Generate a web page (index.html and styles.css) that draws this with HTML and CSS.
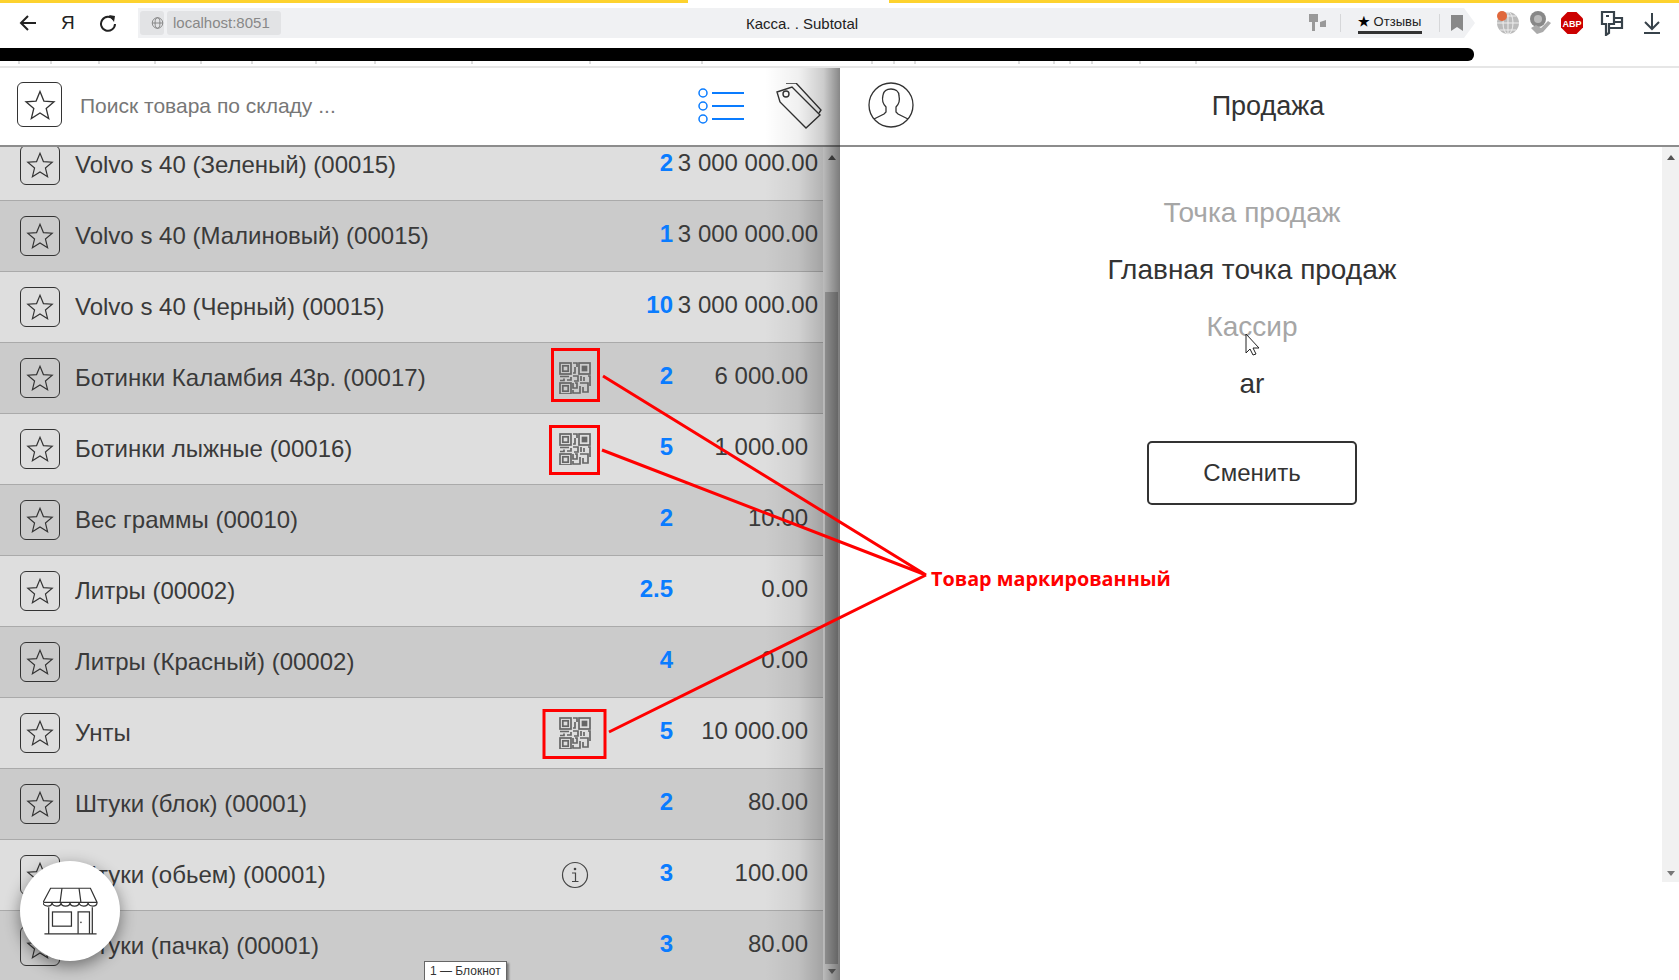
FILE: index.html
```html
<!DOCTYPE html>
<html lang="ru">
<head>
  <meta charset="UTF-8">
  <title>Касса. . Subtotal</title>
  <link rel="stylesheet" href="styles.css">
</head>
<body>
  <svg class="defs" width="0" height="0">
    <symbol id="star" viewBox="0 0 32 32">
      <path d="M16 2.5l3.9 9.6 10.1.7-7.8 6.6 2.5 10.1-8.700-5.500-8.700 5.500 2.500-10.100-7.800-6.600 10.100-.7z" fill="none" stroke="#333" stroke-width="1.300"/>
    </symbol>
    <symbol id="qr" viewBox="0 0 32 32">
      <g fill="none" stroke="#666" stroke-width="1.700">
        <rect x="1" y="1" width="11" height="11"/><rect x="3.800" y="3.800" width="5.400" height="5.400"/>
        <rect x="20" y="1" width="11" height="11"/><rect x="23.500" y="4.500" width="4" height="4" fill="#666"/>
        <rect x="1" y="21" width="11" height="11"/><rect x="3.800" y="23.800" width="5.400" height="5.400"/>
        <path d="M14 1h4v4M16 5v6h-2M1 14.500h9M1 18.500h4v-2M8 18h4v-3M14 14h5v5h-4M22 14v5M25 15v4M29 14h2v10M14 21v5h4v-5h-2M21 21h8v9h-5v-5M21 24v7h-7v-3"/>
      </g>
    </symbol>
  </svg>

  <header class="browser">
    <div class="loadbar"><span class="load-a"></span><span class="load-b"></span></div>
    <div class="toolbar">
      <div class="nav">
        <svg width="18" height="18" viewBox="0 0 18 18"><path d="M17 9H2M9 2L2 9l7 7" fill="none" stroke="#222" stroke-width="2"/></svg>
        <span class="ya">Я</span>
        <svg width="18" height="18" viewBox="0 0 18 18"><path d="M14.500 5.500A7 7 0 1 0 16 10" fill="none" stroke="#222" stroke-width="2"/><path d="M10 1l6 1-1 6z" fill="#222"/></svg>
      </div>
      <div class="address">
        <span class="globe-chip"><svg width="16" height="16" viewBox="0 0 16 16"><g fill="none" stroke="#777"><circle cx="8" cy="8" r="6.500"/><ellipse cx="8" cy="8" rx="3" ry="6.500"/><path d="M1.500 8h13"/></g></svg></span>
        <span class="host">localhost:8051</span>
        <span class="page-title">Касса. . Subtotal</span>
        <svg class="key" width="20" height="22" viewBox="0 0 20 22"><path d="M1 2h9v8H7v9H4v-9H1z" fill="#999"/><path d="M12 10l6-2v7h-6z" fill="#999"/></svg>
        <span class="sep"></span>
        <span class="reviews"><b>★</b> Отзывы</span>
        <span class="sep"></span>
        <svg width="12" height="16" viewBox="0 0 12 16"><path d="M0 0h12v16l-6-4-6 4z" fill="#888"/></svg>
      </div>
      <div class="extensions">
        <svg width="24" height="24" viewBox="0 0 24 24"><circle cx="12" cy="12" r="11" fill="#bbb"/><path d="M1 12h22M12 1v22M4 5h16M4 19h16" stroke="#eee"/><ellipse cx="12" cy="12" rx="5" ry="11" fill="none" stroke="#eee"/><circle cx="6" cy="5" r="5" fill="#e0683c"/></svg>
        <svg width="24" height="24" viewBox="0 0 24 24"><circle cx="10" cy="8" r="8" fill="#888"/><circle cx="10" cy="8" r="4" fill="#bbb"/><path d="M3 17l6 6 6-2 8-9-3-2-7 7-5-3z" fill="#aaa"/></svg>
        <svg class="abp-icon" width="22" height="22" viewBox="0 0 22 22"><path d="M6.500 0h9L22 6.500v9L15.500 22h-9L0 15.500v-9z" fill="#c00"/><text x="11" y="14.500" class="abp">ABP</text></svg>
        <svg class="ext-key" width="24" height="26" viewBox="0 0 24 26"><path d="M2 2h12v12H9v9l-3 2v-11H2zM14 8h8v10H9" fill="none" stroke="#37424a" stroke-width="2.200"/><path d="M6 6h3" stroke="#37424a" stroke-width="2"/><path d="M14 12h8" stroke="#37424a" stroke-width="2"/></svg>
        <svg width="18" height="22" viewBox="0 0 18 22"><path d="M9 1v15M2 10l7 7 7-7M1 21h16" fill="none" stroke="#37424a" stroke-width="2"/></svg>
      </div>
    </div>
    <div class="blackout"></div>
    <svg class="ticks" width="1474" height="3"><path d="M19 0v3M51 0v3M99 0v3M155 0v3M201 0v3M252 0v3M316 0v3M375 0v3M472 0v3M590 0v3M702 0v3M872 0v3M894 0v3M915 0v3M1019 0v3M1054 0v3M1070 0v3M1092 0v3M1140 0v3M1196 0v3" stroke="#bbb"/></svg>
  </header>

  <main class="app">
    <section class="stock">
      <div class="stock-head">
        <span class="star-box big"><svg width="32" height="32"><use href="#star"/></svg></span>
        <span class="search">Поиск товара по складу ...</span>
        <svg class="list-icon" width="46" height="36" viewBox="0 0 46 36"><g fill="none" stroke="#0a7cff" stroke-width="1.500"><circle cx="5" cy="5" r="4"/><circle cx="5" cy="18" r="4"/><circle cx="5" cy="31" r="4"/><path d="M14 5h32M14 18h32M14 31h32" stroke-width="2"/></g></svg>
        <svg class="tag-icon" width="46" height="46" viewBox="0 0 46 46"><g fill="none" stroke="#333" stroke-width="1.400"><path d="M1 9L16 4l28 28-14 13L4 19z"/><path d="M10 0h10l25 27-2 3"/><circle cx="10" cy="11" r="3"/></g></svg>
      </div>
      <div class="stock-body">
        <div class="rows">
          <div class="row"><span class="star-box"><svg width="28" height="28"><use href="#star"/></svg></span><span class="name">Volvo s 40 (Зеленый) (00015)</span><span class="qty">2</span><span class="price long">3 000 000.00</span></div>
          <div class="row"><span class="star-box"><svg width="28" height="28"><use href="#star"/></svg></span><span class="name">Volvo s 40 (Малиновый) (00015)</span><span class="qty">1</span><span class="price long">3 000 000.00</span></div>
          <div class="row"><span class="star-box"><svg width="28" height="28"><use href="#star"/></svg></span><span class="name">Volvo s 40 (Черный) (00015)</span><span class="qty">10</span><span class="price long">3 000 000.00</span></div>
          <div class="row"><span class="star-box"><svg width="28" height="28"><use href="#star"/></svg></span><span class="name">Ботинки Каламбия 43р. (00017)</span><svg class="mark" width="32" height="32"><use href="#qr"/></svg><span class="qty">2</span><span class="price">6 000.00</span></div>
          <div class="row"><span class="star-box"><svg width="28" height="28"><use href="#star"/></svg></span><span class="name">Ботинки лыжные (00016)</span><svg class="mark" width="32" height="32"><use href="#qr"/></svg><span class="qty">5</span><span class="price">1 000.00</span></div>
          <div class="row"><span class="star-box"><svg width="28" height="28"><use href="#star"/></svg></span><span class="name">Вес граммы (00010)</span><span class="qty">2</span><span class="price">10.00</span></div>
          <div class="row"><span class="star-box"><svg width="28" height="28"><use href="#star"/></svg></span><span class="name">Литры (00002)</span><span class="qty">2.5</span><span class="price">0.00</span></div>
          <div class="row"><span class="star-box"><svg width="28" height="28"><use href="#star"/></svg></span><span class="name">Литры (Красный) (00002)</span><span class="qty">4</span><span class="price">0.00</span></div>
          <div class="row"><span class="star-box"><svg width="28" height="28"><use href="#star"/></svg></span><span class="name">Унты</span><svg class="mark" width="32" height="32"><use href="#qr"/></svg><span class="qty">5</span><span class="price">10 000.00</span></div>
          <div class="row"><span class="star-box"><svg width="28" height="28"><use href="#star"/></svg></span><span class="name">Штуки (блок) (00001)</span><span class="qty">2</span><span class="price">80.00</span></div>
          <div class="row"><span class="star-box"><svg width="28" height="28"><use href="#star"/></svg></span><span class="name">Штуки (обьем) (00001)</span><svg class="mark info" width="28" height="28" viewBox="0 0 28 28"><g fill="none" stroke="#444" stroke-width="1.200"><circle cx="14" cy="14" r="12.500"/><path d="M11 12h3.500v8M11 20.500h6.500"/></g><circle cx="14" cy="8" r="1.300" fill="#444"/></svg><span class="qty">3</span><span class="price">100.00</span></div>
          <div class="row"><span class="star-box"><svg width="28" height="28"><use href="#star"/></svg></span><span class="name">Штуки (пачка) (00001)</span><span class="qty">3</span><span class="price">80.00</span></div>
        </div>
        <div class="scrollbar">
          <span class="arrow up"></span>
          <span class="thumb"></span>
          <span class="arrow down"></span>
        </div>
      </div>
      <div class="edge-shadow"></div>
    </section>

    <section class="sale">
      <div class="sale-head">
        <svg class="avatar" width="46" height="46" viewBox="0 0 46 46"><g fill="none" stroke="#333" stroke-width="1.300"><circle cx="23" cy="23" r="22"/><path d="M6 37l10-5 2-2v-5c-3-3-4-8-3-12 1-5 5-6 8-6 4 0 8 2 8 7 1 4 0 8-3 11v5l2 2 10 5"/></g></svg>
        <h1 class="sale-title">Продажа</h1>
      </div>
      <div class="sale-body">
        <div class="sale-info">
          <div class="label">Точка продаж</div>
          <div class="value">Главная точка продаж</div>
          <div class="label">Кассир</div>
          <div class="value">ar</div>
          <button class="change">Сменить</button>
        </div>
        <div class="side-scroll">
          <span class="arrow up"></span>
          <span class="arrow down"></span>
        </div>
      </div>
    </section>
  </main>

  <button class="store-btn">
    <svg width="55" height="48" viewBox="0 0 58 50"><g fill="none" stroke="#333" stroke-width="1.300"><path d="M8 1h42l7 15c0 5-9 5-9.500 0 0 5-9 5-9.500 0 0 5-9.500 5-9.500 0 0 5-9.500 5-9.500 0 0 5-9 5-9.500 0 0 5-9 5-9.500 0z"/><path d="M1 16h56M20 1l-2 15M38 1l2 15"/><path d="M6 21v28h46V21M1.500 49h55"/><rect x="10" y="26" width="20" height="15"/><path d="M37 49V26h12v23"/></g><circle cx="40" cy="37" r=".8" fill="#333"/></svg>
  </button>
  <div class="notepad">1 — Блокнот</div>

  <svg class="callouts" width="1679" height="980" viewBox="0 0 1679 980">
    <g fill="none" stroke="#f00" stroke-width="3">
      <rect x="552.500" y="349.500" width="46" height="51"/>
      <rect x="550.500" y="426.500" width="48" height="47"/>
      <rect x="544" y="710.500" width="61" height="47"/>
      <path d="M603 376L926 575L602 450M926 575L609 732"/>
    </g>
    <path d="M1246 334v19l4-4 3 6 3-1-3-6h6z" fill="#fff" stroke="#222"/>
  </svg>
  <div class="callout-label">Товар маркированный</div>
</body>
</html>
```

FILE: styles.css
```css
/* Общее */
* {
  box-sizing: border-box;
}
html, body {
  margin: 0;
  height: 980px;
  overflow: hidden;
}
body {
  position: relative;
  font-family: "Liberation Sans", Arial, sans-serif;
  background: #fff;
  color: #333;
}
.defs {
  position: absolute;
}

/* Браузер */
.browser {
  height: 68px;
  border-bottom: 2px solid #e6e6e6;
}
.loadbar {
  display: flex;
  justify-content: space-between;
  height: 3px;
}
.load-a {
  width: 688px;
  background: #fdd22e;
}
.load-b {
  width: 790px;
  background: #fdd22e;
}
.toolbar {
  display: flex;
  align-items: center;
  height: 30px;
  margin-top: 5px;
}
.nav {
  display: flex;
  align-items: center;
  gap: 24px;
  width: 138px;
  padding-left: 19px;
}
.ya {
  font-size: 19px;
  color: #222;
}
.address {
  display: flex;
  align-items: center;
  flex: none;
  width: 1337px;
  height: 30px;
  padding: 0 12px 0 2px;
  background: #f0f1f3;
  clip-path: polygon(0 0, 1326px 0, 100% 50%, 1326px 100%, 0 100%);
}
.globe-chip {
  display: flex;
  align-items: center;
  justify-content: center;
  width: 24px;
  height: 24px;
  background: #e2e3e5;
  border-radius: 3px;
}
.host {
  margin-left: 3px;
  padding: 0 6px;
  height: 24px;
  line-height: 24px;
  width: 114px;
  font-size: 15px;
  color: #888;
  background: #e2e3e5;
  border-radius: 3px;
}
.page-title {
  flex: 1;
  padding-left: 15px;
  font-size: 15px;
  color: #222;
  text-align: center;
}
.key {
  margin-right: 12px;
}
.sep {
  width: 1px;
  height: 18px;
  background: #d6d7d9;
}
.reviews {
  margin: 0 17px;
  padding-bottom: 1px;
  border-bottom: 3px solid #333;
  font-size: 13px;
  line-height: 17px;
  color: #222;
  width: 64px;
  white-space: nowrap;
}
.reviews b {
  color: #000;
}
.address svg:last-child {
  margin-left: 11px;
}
.extensions {
  display: flex;
  align-items: center;
  gap: 8px;
  padding-left: 21px;
}
.abp {
  font-size: 9px;
  font-weight: bold;
  fill: #fff;
  text-anchor: middle;
}
.abp-icon {
  margin-left: 1px;
}
.ext-key {
  margin-left: 9px;
}
.extensions svg:last-child {
  margin-left: 11px;
}
.blackout {
  width: 1474px;
  height: 13px;
  margin-top: 10px;
  background: #000;
  border-radius: 0 6px 6px 0;
}
.ticks {
  display: block;
}

/* Приложение */
.app {
  display: flex;
  height: 912px;
}
.stock {
  position: relative;
  display: flex;
  flex-direction: column;
  width: 840px;
}
.stock-head {
  display: flex;
  align-items: center;
  height: 79px;
  padding: 0 0 2px 17px;
  border-bottom: 2px solid #8c8c8c;
}
.search {
  flex: 1;
  margin-left: 18px;
  font-size: 21px;
  color: #777;
}
.list-icon {
  margin-right: 32px;
}
.tag-icon {
  margin-right: 18px;
}
.star-box {
  display: flex;
  align-items: center;
  justify-content: center;
  flex: none;
  width: 40px;
  height: 40px;
  border: 1.500px solid #333;
  border-radius: 6px;
}
.star-box.big {
  width: 45px;
  height: 45px;
  margin-bottom: 2px;
}
.stock-body {
  display: flex;
  flex: 1;
  overflow: hidden;
}
.rows {
  flex: 1;
  margin-top: -17px;
}
.row {
  display: flex;
  align-items: center;
  height: 71px;
  padding: 0 15px 0 20px;
  background: #dedede;
  border-bottom: 1px solid #aaa;
}
.row:nth-child(even) {
  background: #cbcbcb;
}
.name {
  flex: 1;
  margin-left: 15px;
  font-size: 24px;
  color: #3a3a3a;
}
.mark {
  margin-right: 32px;
}
.mark.info {
  margin-right: 34px;
}
.qty {
  width: 50px;
  padding-bottom: 4px;
  font-size: 24px;
  font-weight: bold;
  color: #0a7cff;
  text-align: right;
}
.price {
  width: 135px;
  padding-bottom: 4px;
  font-size: 24px;
  color: #3a3a3a;
  text-align: right;
  white-space: nowrap;
}
.price.long {
  width: 145px;
  margin-right: -10px;
}
.scrollbar {
  position: relative;
  display: flex;
  flex-direction: column;
  align-items: center;
  flex: none;
  width: 17px;
  background: #e8e8e8;
}
.thumb {
  width: 13px;
  height: 672px;
  margin-top: 145px;
  background: #b5b5b5;
}
.arrow {
  position: absolute;
  width: 0;
  height: 0;
  border-left: 4px solid transparent;
  border-right: 4px solid transparent;
}
.arrow.up {
  top: 8px;
  border-bottom: 5px solid #555;
}
.arrow.down {
  bottom: 6px;
  border-top: 5px solid #777;
}
.edge-shadow {
  position: absolute;
  top: 0;
  right: 0;
  bottom: 0;
  width: 75px;
  background: linear-gradient(to right, rgba(0, 0, 0, 0), rgba(0, 0, 0, 0.06) 45%, rgba(0, 0, 0, 0.2) 78%, rgba(0, 0, 0, 0.47));
  pointer-events: none;
}

/* Продажа */
.sale {
  display: flex;
  flex-direction: column;
  flex: 1;
}
.sale-head {
  display: flex;
  align-items: center;
  height: 79px;
  padding: 0 0 2px 28px;
  border-bottom: 2px solid #8c8c8c;
}
.avatar {
  margin-bottom: 2px;
}
.sale-title {
  flex: 1;
  margin: 0;
  padding: 2px 57px 0 0;
  font-size: 27px;
  font-weight: normal;
  color: #333;
  text-align: center;
}
.sale-body {
  display: flex;
  flex: 1;
}
.sale-info {
  display: flex;
  flex-direction: column;
  align-items: center;
  flex: 1;
  padding: 46px 0 0 2px;
}
.label, .value {
  height: 57px;
  line-height: 40px;
  font-size: 28px;
}
.label {
  color: #a6a6a6;
}
.value {
  color: #333;
}
.change {
  width: 210px;
  height: 64px;
  margin-top: 20px;
  background: #fff;
  border: 2px solid #333;
  border-radius: 5px;
  font-family: inherit;
  font-size: 24px;
  color: #333;
}
.side-scroll {
  position: relative;
  display: flex;
  justify-content: center;
  flex: none;
  width: 17px;
  height: 735px;
  background: #f1f1f1;
}

/* Поверх страницы */
.store-btn {
  position: absolute;
  left: 20px;
  top: 861px;
  display: flex;
  align-items: center;
  justify-content: center;
  width: 100px;
  height: 100px;
  padding: 0;
  background: #fff;
  border: none;
  border-radius: 50%;
  box-shadow: 0 5px 16px rgba(0, 0, 0, 0.45);
}
.notepad {
  position: absolute;
  left: 424px;
  top: 961px;
  width: 83px;
  height: 19px;
  padding-left: 5px;
  background: #fff;
  border: 1px solid #666;
  border-bottom: none;
  box-shadow: 2px 2px 2px rgba(0, 0, 0, 0.4);
  font-size: 12px;
  line-height: 19px;
  color: #333;
}
.callouts {
  position: absolute;
  left: 0;
  top: 0;
  pointer-events: none;
}
.callout-label {
  position: absolute;
  left: 931px;
  top: 565px;
  font-family: "Open Sans", sans-serif;
  font-size: 19.800px;
  font-weight: bold;
  color: #f00;
}
```
